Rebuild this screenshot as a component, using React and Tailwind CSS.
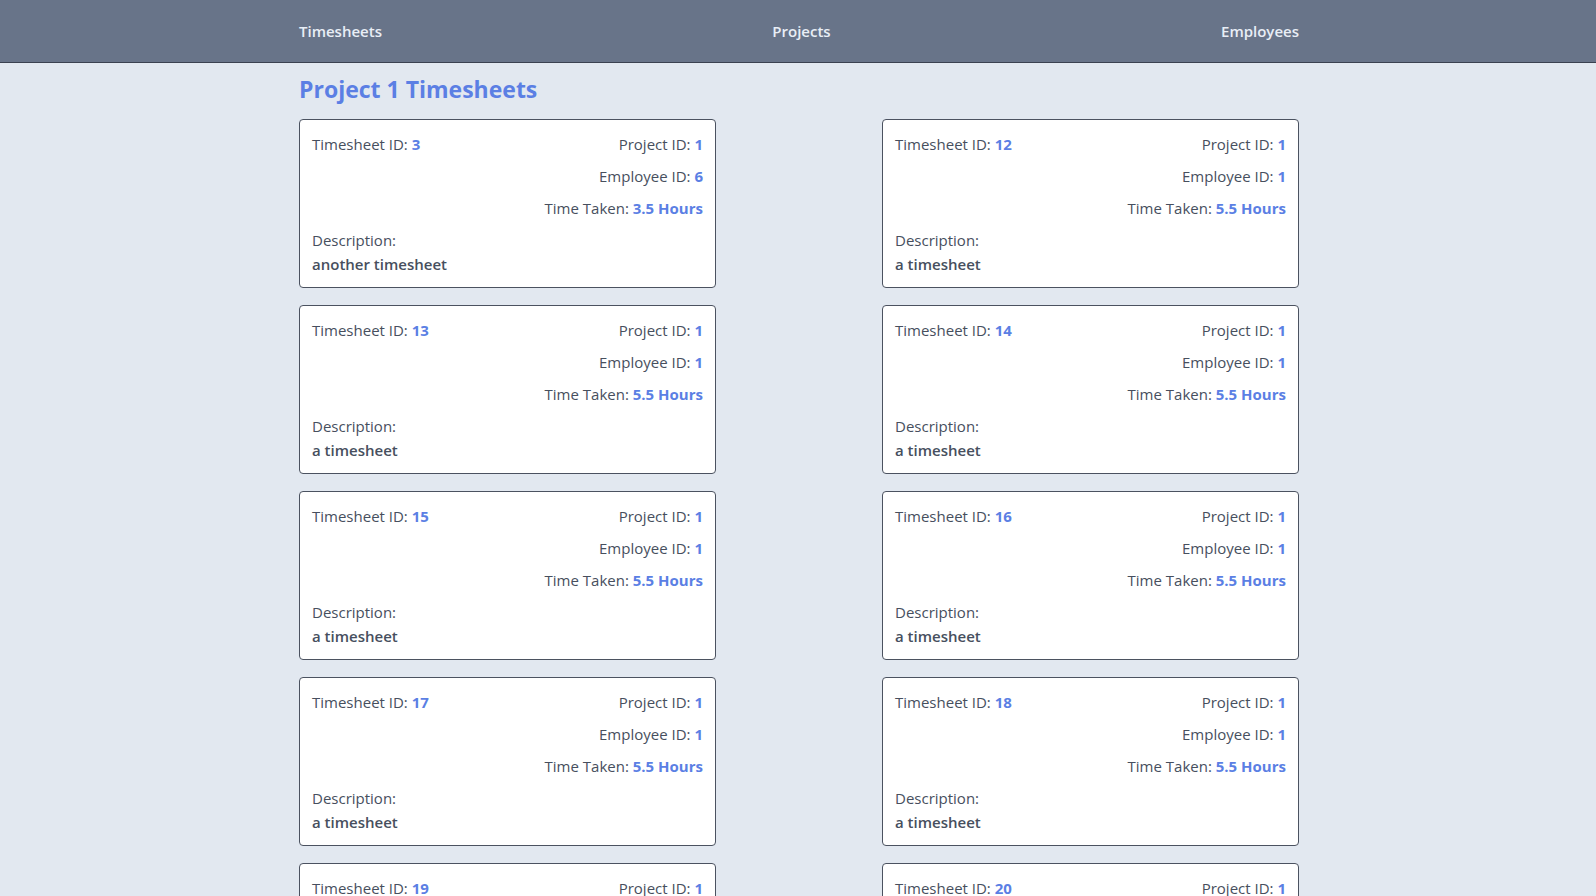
import React from 'react';

const timesheets = [
    { id: 3, projectId: 1, employeeId: 6, hours: 3.5, description: 'another timesheet' },
    { id: 12, projectId: 1, employeeId: 1, hours: 5.5, description: 'a timesheet' },
    { id: 13, projectId: 1, employeeId: 1, hours: 5.5, description: 'a timesheet' },
    { id: 14, projectId: 1, employeeId: 1, hours: 5.5, description: 'a timesheet' },
    { id: 15, projectId: 1, employeeId: 1, hours: 5.5, description: 'a timesheet' },
    { id: 16, projectId: 1, employeeId: 1, hours: 5.5, description: 'a timesheet' },
    { id: 17, projectId: 1, employeeId: 1, hours: 5.5, description: 'a timesheet' },
    { id: 18, projectId: 1, employeeId: 1, hours: 5.5, description: 'a timesheet' },
    { id: 19, projectId: 1, employeeId: 1, hours: 5.5, description: 'a timesheet' },
    { id: 20, projectId: 1, employeeId: 1, hours: 5.5, description: 'a timesheet' },
];

const TimesheetCard = ({ sheet }) => (
    <div className="w-[417px] h-[169px] bg-white border border-[#4b5260] rounded-[4px] px-3 py-3 text-[15px] leading-6 text-[#474f5e]">
        <div className="flex justify-between">
            <p>Timesheet ID: <span className="font-bold text-[#5b7fe4]">{sheet.id}</span></p>
            <p>Project ID: <span className="font-bold text-[#5b7fe4]">{sheet.projectId}</span></p>
        </div>
        <p className="text-right mt-2">Employee ID: <span className="font-bold text-[#5b7fe4]">{sheet.employeeId}</span></p>
        <p className="text-right mt-2">Time Taken: <span className="font-bold text-[#5b7fe4]">{sheet.hours} Hours</span></p>
        <p className="mt-2">Description:</p>
        <p className="font-semibold leading-[23px] mt-[1px]">{sheet.description}</p>
    </div>
);

export default function App() {
    return (
        <div className="min-h-screen bg-[#e2e8f0] pl-[2px]" style={{ fontFamily: '"Segoe UI", "Open Sans", sans-serif' }}>
            {/* Nav */}
            <nav className="h-[63px] bg-[#687489] border-b border-[#3a4150] -ml-[2px]">
                <div className="w-[1000px] mx-auto h-full flex items-center justify-between text-[15px] font-semibold text-[#e8eef6] translate-x-px">
                    <a>Timesheets</a>
                    <a>Projects</a>
                    <a>Employees</a>
                </div>
            </nav>

            <main className="w-[1000px] mx-auto pt-2">
                <h1 className="text-[23px] leading-9 font-bold text-[#5b7fe4] mb-3">Project 1 Timesheets</h1>
                <div className="grid grid-cols-2 gap-y-[17px]">
                    {timesheets.map((sheet, i) => (
                        <div key={sheet.id} className={i % 2 === 0 ? 'flex justify-start' : 'flex justify-end'}>
                            <TimesheetCard sheet={sheet} />
                        </div>
                    ))}
                </div>
            </main>
        </div>
    );
}
